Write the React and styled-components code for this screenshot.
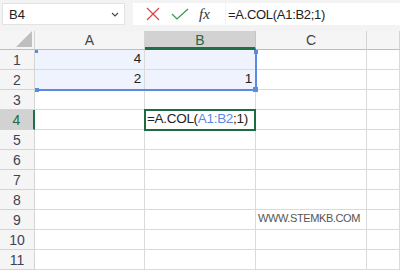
import React from 'react';
import styled, { createGlobalStyle } from 'styled-components';

const GlobalStyle = createGlobalStyle`
  body {
    margin: 0;
    background: #fff;
    font-family: 'Liberation Sans', Arial, sans-serif;
    overflow: hidden;
  }
`;

const CELL_FONT = `'Liberation Sans', Arial, sans-serif`;

const Window = styled.div`
  width: 400px;
  height: 270px;
  overflow: hidden;
  display: flex;
  flex-direction: column;
`;

const Toolbar = styled.div`
  display: flex;
  align-items: flex-start;
  height: 33px;
  padding: 3px 0 0 2px;
  box-sizing: border-box;
  background: #f3f3f3;
`;

const NameBox = styled.div`
  width: 123px;
  height: 22px;
  box-sizing: border-box;
  background: #fff;
  border: 1px solid #e3e3e3;
  display: flex;
  align-items: center;
  justify-content: space-between;
  padding: 0 5px 0 6px;
  font-size: 13px;
  color: #222;
`;

const FormulaTools = styled.div`
  margin-left: 8px;
  width: 92px;
  height: 22px;
  background: #fff;
  display: flex;
  align-items: center;
  padding-left: 8px;
  box-sizing: border-box;
`;

const ToolIcon = styled.span`
  display: flex;
  align-items: center;
  justify-content: center;
  width: ${({ $w }) => $w || 26}px;
  height: 22px;
`;

const Fx = styled.span`
  font-family: 'Liberation Serif', 'Times New Roman', serif;
  font-style: italic;
  font-size: 15px;
  color: #333;
  margin-left: 4px;
`;

const FormulaInput = styled.div`
  margin-left: 1px;
  flex: 1;
  height: 22px;
  background: #fff;
  display: flex;
  align-items: center;
  padding-left: 2px;
  font-family: ${CELL_FONT};
  font-size: 13px;
  letter-spacing: -0.3px;
  color: #222;
`;

const Sheet = styled.div`
  display: grid;
  grid-template-columns: 35px 110px 111px 111px 1fr;
  grid-template-rows: 19px;
  grid-auto-rows: 20px;
  background: #fff;
`;

const Corner = styled.div`
  grid-column: 1;
  grid-row: 1;
  background: #f5f5f5;
  border-right: 1px solid #d4d4d4;
  border-bottom: 1px solid #bdbdbd;
  display: flex;
  align-items: flex-end;
  justify-content: flex-end;
  padding: 0 2px 2px 0;
`;

const Triangle = styled.div`
  width: 0;
  height: 0;
  border-left: 16px solid transparent;
  border-bottom: 16px solid #bfbfbf;
`;

const ColHeader = styled.div`
  background: ${({ $active }) => ($active ? '#d2d2d2' : '#f5f5f5')};
  border-right: 1px solid ${({ $active }) => ($active ? '#c4c4c4' : '#d4d4d4')};
  border-bottom: ${({ $active }) => ($active ? '3px solid #1e7145' : '1px solid #bdbdbd')};
  display: flex;
  align-items: center;
  justify-content: center;
  font-size: 14px;
  color: ${({ $active }) => ($active ? '#1e6b42' : '#444')};
  padding-top: ${({ $active }) => ($active ? '2px' : '0')};
`;

const RowHeader = styled.div`
  grid-column: 1;
  background: ${({ $active }) => ($active ? '#d2d2d2' : '#f5f5f5')};
  border-right: ${({ $active }) => ($active ? '2px solid #1e7145' : '1px solid #d4d4d4')};
  border-bottom: 1px solid #d4d4d4;
  display: flex;
  align-items: center;
  justify-content: center;
  font-size: 14px;
  color: ${({ $active }) => ($active ? '#1e6b42' : '#3e4257')};
`;

const Cell = styled.div`
  border-right: 1px solid #dadada;
  border-bottom: 1px solid #dadada;
  background: ${({ $inRange }) => ($inRange ? '#eef3fd' : '#fff')};
  display: flex;
  align-items: flex-end;
  justify-content: ${({ $align }) => ($align === 'right' ? 'flex-end' : 'flex-start')};
  padding: 0 3px 2px 2px;
  font-family: ${CELL_FONT};
  font-size: 13.5px;
  letter-spacing: -0.3px;
  line-height: 16px;
  color: #222;
  white-space: nowrap;
  overflow: visible;
  position: relative;
  z-index: 0;
`;

const Watermark = styled.span`
  font-family: ${CELL_FONT};
  font-size: 11px;
  letter-spacing: -0.4px;
  color: #555;
  padding-bottom: 1px;
`;

const Ref = styled.span`
  color: #5a8ae0;
`;

const RangeBox = styled.div`
  grid-column: 2 / 4;
  grid-row: 2 / 4;
  margin: 0 -1px -1px 0;
  border-right: 2px solid #5b8ae0;
  border-bottom: 2px solid #5b8ae0;
  position: relative;
  pointer-events: none;
  z-index: 2;
`;

const Handle = styled.div`
  position: absolute;
  width: ${({ $s }) => $s}px;
  height: ${({ $s }) => $s}px;
  background: #5b8ae0;
  ${({ $pos }) => $pos}
`;

const ActiveBox = styled.div`
  grid-column: 3;
  grid-row: 5;
  margin: -1px 0 -1px -1px;
  border: 2px solid #1e6b42;
  pointer-events: none;
  z-index: 3;
`;

const columns = ['A', 'B', 'C', ''];

const data = {
  '1-0': { v: '4', align: 'right' },
  '2-0': { v: '2', align: 'right' },
  '2-1': { v: '1', align: 'right' },
  '4-1': {
    v: (
      <>
        =A.COL(<Ref>A1:B2</Ref>;1)
      </>
    ),
  },
  '9-2': { v: <Watermark>WWW.STEMKB.COM</Watermark> },
};

const XIcon = () => (
  <svg width="14" height="14" viewBox="0 0 14 14">
    <path d="M1 1 L13 13 M13 1 L1 13" stroke="#e0403f" strokeWidth="1.2" fill="none" />
  </svg>
);

const CheckIcon = () => (
  <svg width="18" height="12" viewBox="0 0 18 12">
    <path d="M1 6 L6 11 L17 1" stroke="#2e9b48" strokeWidth="1.2" fill="none" />
  </svg>
);

const Chevron = () => (
  <svg width="8" height="5" viewBox="0 0 8 5">
    <path d="M1 1 L4 4 L7 1" stroke="#444" strokeWidth="1.1" fill="none" />
  </svg>
);

const App = () => {
  const rows = Array.from({ length: 11 }, (_, i) => i + 1);
  return (
    <Window>
      <GlobalStyle />
      <Toolbar>
        <NameBox>
          <span>B4</span>
          <Chevron />
        </NameBox>
        <FormulaTools>
          <ToolIcon $w={24}>
            <XIcon />
          </ToolIcon>
          <ToolIcon $w={30}>
            <CheckIcon />
          </ToolIcon>
          <Fx>fx</Fx>
        </FormulaTools>
        <FormulaInput>=A.COL(A1:B2;1)</FormulaInput>
      </Toolbar>
      <Sheet>
        <Corner>
          <Triangle />
        </Corner>
        {columns.map((c, ci) => (
          <ColHeader key={c || 'd'} $active={ci === 1} style={{ gridColumn: ci + 2, gridRow: 1 }}>
            {c}
          </ColHeader>
        ))}
        {rows.map((r) => (
          <React.Fragment key={r}>
            <RowHeader $active={r === 4} style={{ gridRow: r + 1 }}>
              {r}
            </RowHeader>
            {columns.map((c, ci) => {
              const cell = data[`${r}-${ci}`];
              return (
                <Cell
                  key={`${r}-${ci}`}
                  style={{ gridColumn: ci + 2, gridRow: r + 1 }}
                  $inRange={r <= 2 && ci <= 1}
                  $align={cell && cell.align}
                >
                  {cell && cell.v}
                </Cell>
              );
            })}
          </React.Fragment>
        ))}
        <RangeBox>
          <Handle $s={3} $pos="left: 0; top: 0;" />
          <Handle $s={4} $pos="right: -3px; top: 0;" />
          <Handle $s={4} $pos="left: 0; bottom: -3px;" />
          <Handle $s={5} $pos="right: -3px; bottom: -3px;" />
        </RangeBox>
        <ActiveBox />
      </Sheet>
    </Window>
  );
};

export default App;
